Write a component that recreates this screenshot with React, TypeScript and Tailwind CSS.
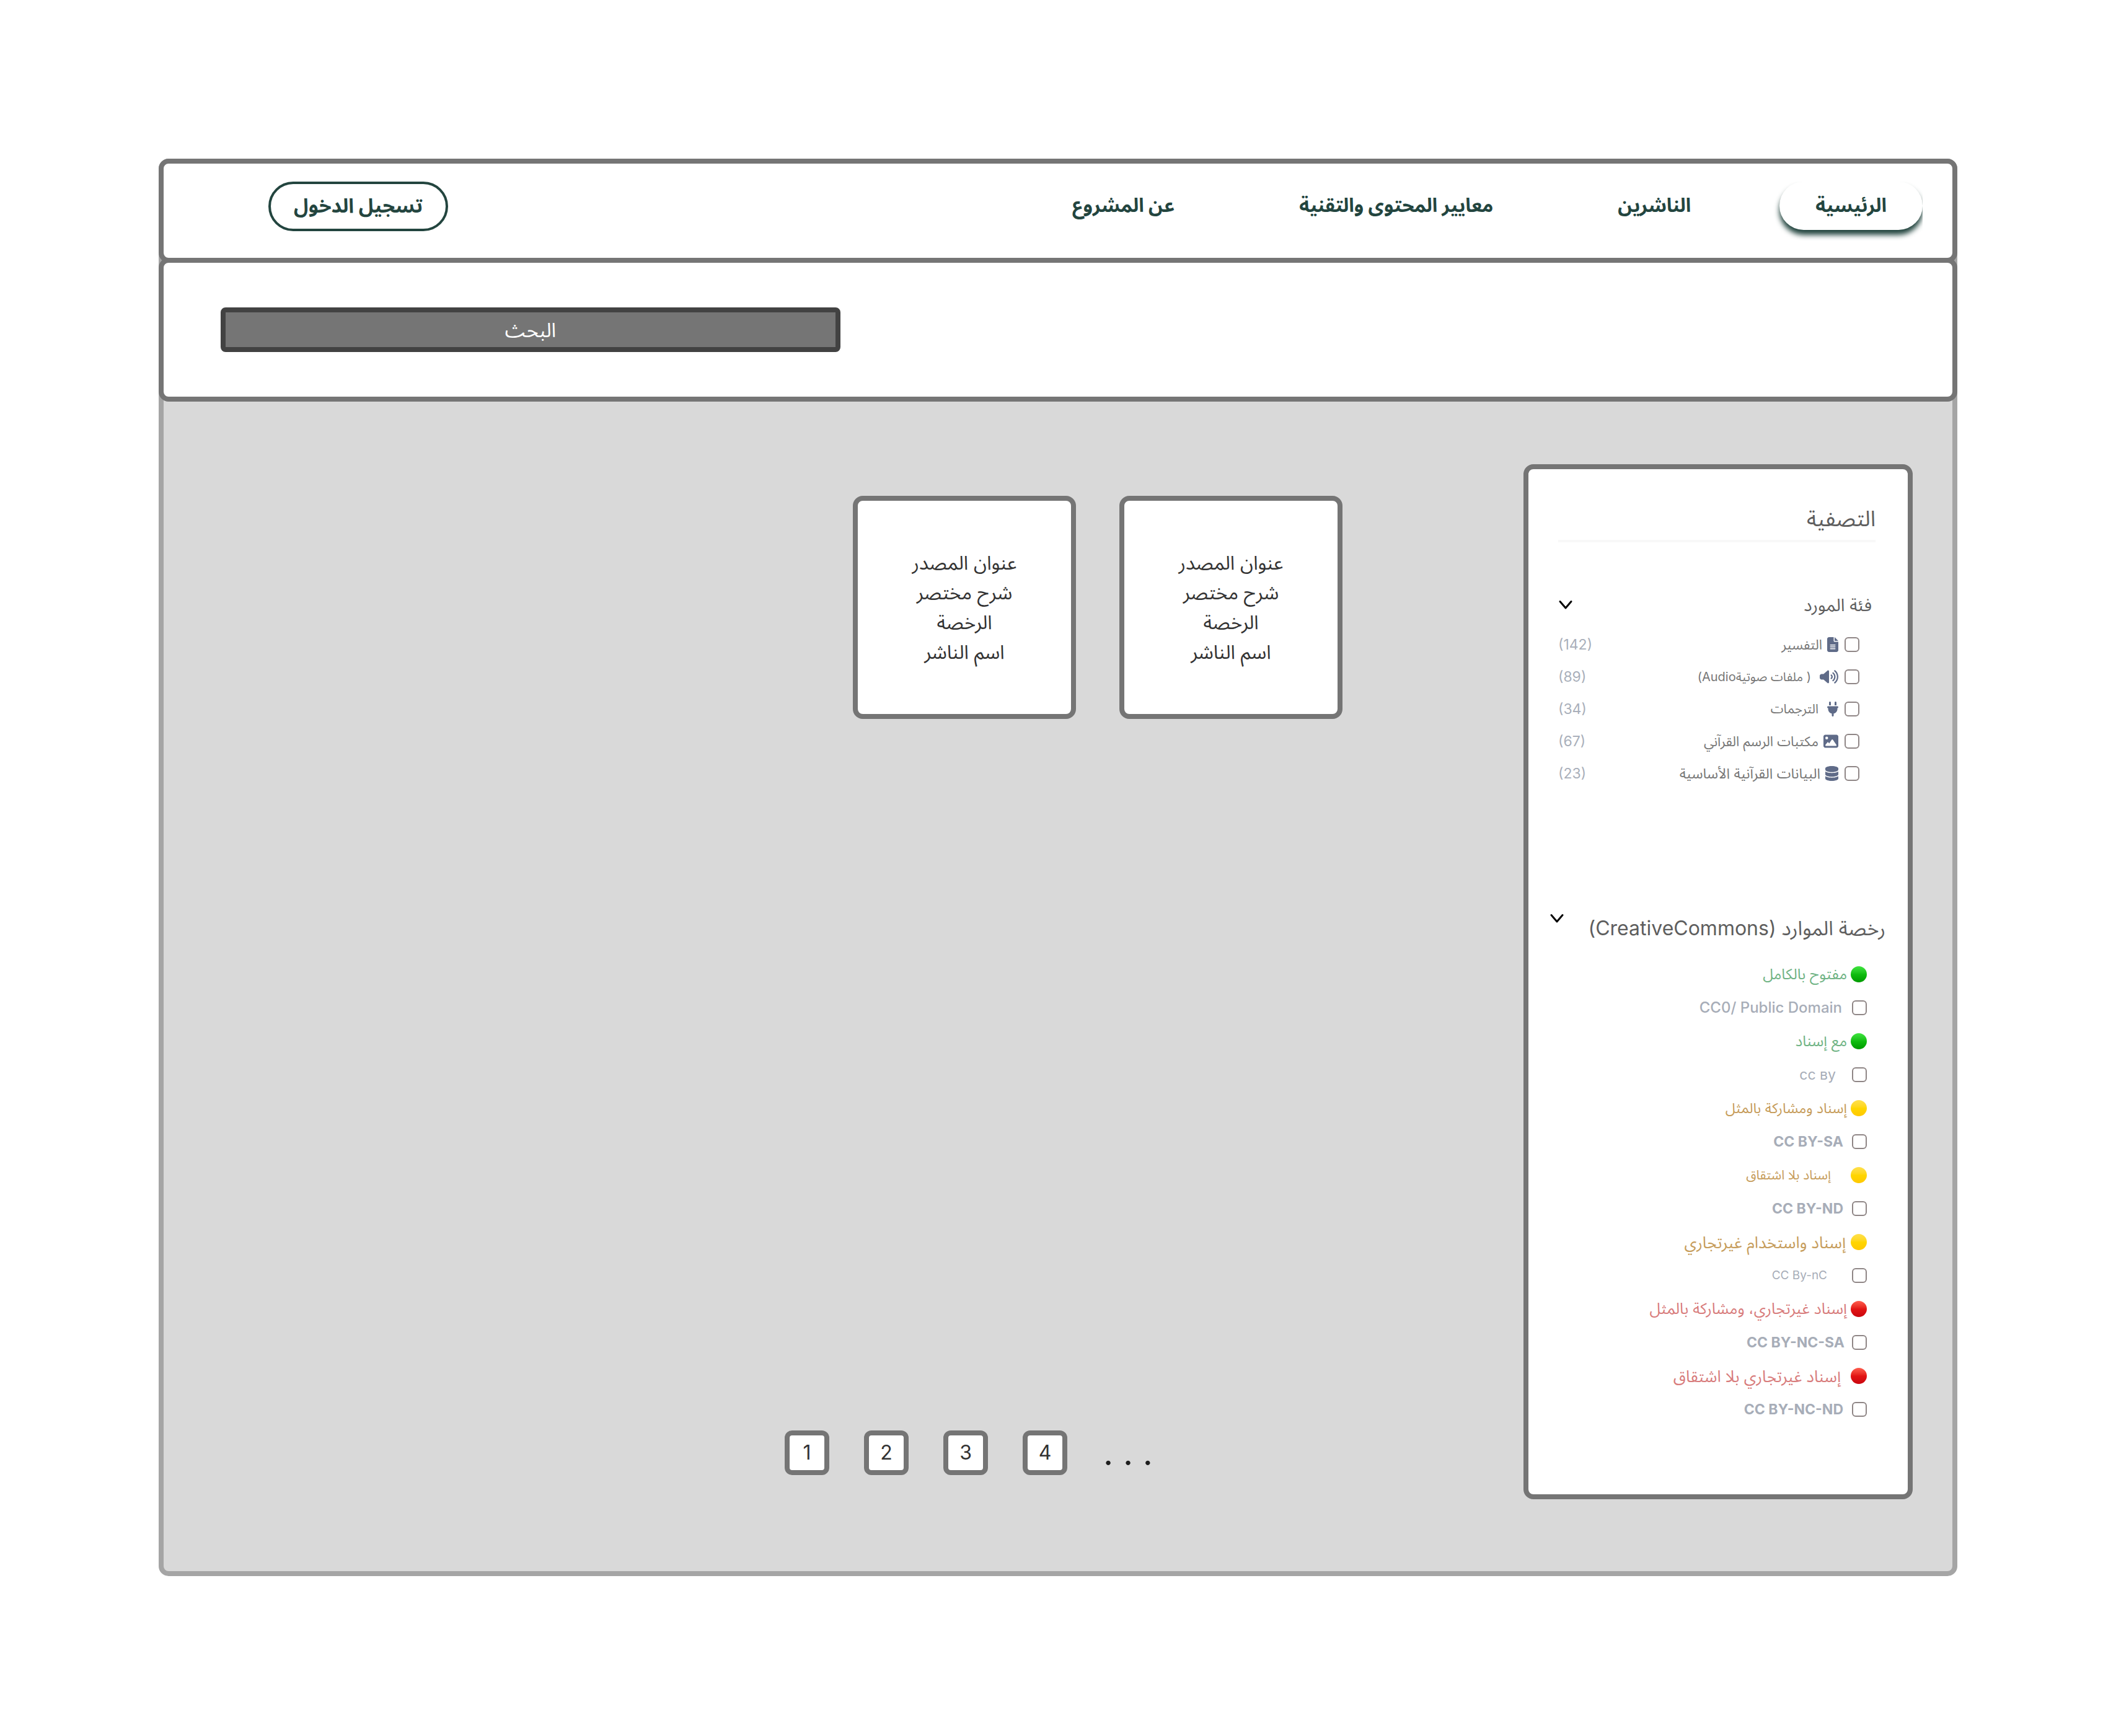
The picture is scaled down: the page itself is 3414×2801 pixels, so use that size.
import type { ComponentType } from 'react';
import { FaDatabase, FaFileLines, FaImage, FaPlug, FaVolumeHigh } from 'react-icons/fa6';

type Category = {
  label: string;
  count: number;
  icon: ComponentType<{ className?: string }>;
  iconSize: string;
  gap: string;
  text: string;
};

const categories: Category[] = [
  { label: 'التفسير', count: 142, icon: FaFileLines, iconSize: 'h-6 w-[18px]', gap: 'gap-2', text: 'text-[22px]' },
  { label: '( ملفات صوتيةAudio)', count: 89, icon: FaVolumeHigh, iconSize: 'h-6 w-[30px]', gap: 'gap-3.5', text: 'text-[20px]' },
  { label: 'الترجمات', count: 34, icon: FaPlug, iconSize: 'h-6 w-[18px]', gap: 'gap-3.5', text: 'text-[21px]' },
  { label: 'مكتبات الرسم القرآني', count: 67, icon: FaImage, iconSize: 'h-6 w-6', gap: 'gap-2', text: 'text-[22px]' },
  { label: 'البيانات القرآنية الأساسية', count: 23, icon: FaDatabase, iconSize: 'h-6 w-[21px]', gap: 'gap-2', text: 'text-[23px]' },
];

const dots = {
  green: 'bg-linear-to-b from-[#3fe53f] via-[#0fbd0f] to-[#009a00]',
  yellow: 'bg-linear-to-b from-[#ffe04a] via-[#ffd600] to-[#ffc800]',
  red: 'bg-linear-to-b from-[#ff5a4c] via-[#e31414] to-[#c9060f]',
};

const tones = {
  green: 'text-[#6fb384]',
  yellow: 'text-[#c69c5a]',
  red: 'text-[#d87c7c]',
};

type License = {
  tone: 'green' | 'yellow' | 'red';
  title: string;
  titleStyle: string;
  code: string;
  codeStyle: string;
};

const licenses: License[] = [
  { tone: 'green', title: 'مفتوح بالكامل', titleStyle: 'gap-1.5 text-[24px]', code: 'CC0/ Public Domain', codeStyle: 'gap-4 text-[24px] font-medium' },
  { tone: 'green', title: 'مع إسناد', titleStyle: 'gap-1.5 text-[24px]', code: 'cc вy', codeStyle: 'gap-[26px] text-[23px]' },
  { tone: 'yellow', title: 'إسناد ومشاركة بالمثل', titleStyle: 'gap-1.5 text-[23px]', code: 'CC BY-SA', codeStyle: 'gap-3.5 text-[23px] font-bold' },
  { tone: 'yellow', title: 'إسناد بلا اشتقاق', titleStyle: 'gap-8 text-[21px]', code: 'CC BY-ND', codeStyle: 'gap-3.5 text-[23px] font-bold' },
  { tone: 'yellow', title: 'إسناد واستخدام غيرتجاري', titleStyle: 'gap-2 text-[26px]', code: 'CC By-nC', codeStyle: 'gap-10 text-[19px]' },
  { tone: 'red', title: 'إسناد غيرتجاري، ومشاركة بالمثل', titleStyle: 'gap-1.5 text-[25px]', code: 'CC BY-NC-SA', codeStyle: 'gap-3 text-[23px] font-bold' },
  { tone: 'red', title: 'إسناد غيرتجاري بلا اشتقاق', titleStyle: 'gap-4 text-[26px]', code: 'CC BY-NC-ND', codeStyle: 'gap-3.5 text-[23px] font-bold' },
];

const cardLines = ['عنوان المصدر', 'شرح مختصر', 'الرخصة', 'اسم الناشر'];

function Checkbox() {
  return (
    <input
      type="checkbox"
      className="size-6 shrink-0 appearance-none rounded-[6px] border-2 border-[#8f8686] bg-white checked:bg-[#8f8686]"
    />
  );
}

function Chevron() {
  return (
    <svg viewBox="0 0 24 16" className="h-4 w-6" fill="none" stroke="#000" strokeWidth="3" strokeLinecap="round" strokeLinejoin="round">
      <path d="M3 2.5 12 13 21 2.5" />
    </svg>
  );
}

function SectionHeading({ title, className }: { title: string; className: string }) {
  return (
    <h3 className={className}>
      <span>{title}</span>
      <button type="button" aria-label={title} className="cursor-pointer">
        <Chevron />
      </button>
    </h3>
  );
}

function Header() {
  return (
    <header className="-mx-2 -mt-2 flex h-[168px] items-start justify-between rounded-2xl border-8 border-[#757575] bg-white ps-12 pe-[169px] pt-[29px] text-[31px] font-bold text-[#23453f]">
      <nav className="flex gap-[201px]">
        <div className="-me-[58px] [clip-path:inset(0_0_-24px_-24px)]">
          <a href="#home" className="flex h-[78px] items-center rounded-[40px] bg-white px-[58px] pb-0.5 shadow-[0_8px_8px_#23453f]">
            الرئيسية
          </a>
        </div>
        <a href="#publishers" className="flex h-[78px] items-center pb-0.5">
          الناشرين
        </a>
        <a href="#standards" className="flex h-[78px] items-center pb-0.5">
          معايير المحتوى والتقنية
        </a>
        <a href="#about" className="flex h-[78px] items-center pb-0.5">
          عن المشروع
        </a>
      </nav>
      <button type="button" className="flex h-20 w-[290px] cursor-pointer items-center justify-center rounded-[40px] border-4 border-[#23453f] pb-0.5 text-[32px]">
        تسجيل الدخول
      </button>
    </header>
  );
}

function SearchBar() {
  return (
    <section className="-mx-2 -mt-2 flex h-[232px] items-start justify-end rounded-2xl border-8 border-[#757575] bg-white pe-[92px] pt-[72px]">
      <input
        type="text"
        aria-label="البحث"
        placeholder="البحث"
        className="h-[72px] w-[1000px] rounded-lg border-8 border-[#424242] bg-[#757575] text-center text-[32px] text-white outline-none placeholder:text-white"
      />
    </section>
  );
}

function Filters() {
  return (
    <aside className="w-[628px] shrink-0 rounded-2xl border-8 border-[#757575] bg-white ps-[52px] pe-12 pt-11 pb-[110px] text-[#5e5e5e]">
      <h2 className="border-b-4 border-[#f8f8f8] text-[35px] leading-[70px]">التصفية</h2>

      <SectionHeading title="فئة المورد" className="mt-[77px] flex h-12 items-center justify-between ps-1.5 text-[28px]" />
      <ul className="mt-3.5">
        {categories.map(({ label, count, icon: Icon, iconSize, gap, text }) => (
          <li key={label} className="flex h-[52px] items-center justify-between ps-[26px]">
            <label className="flex items-center gap-2.5">
              <Checkbox />
              <span className={`flex items-center ${gap}`}>
                <Icon className={`${iconSize} text-[#5f6b88]`} />
                <span className={`${text} text-[#777777]`}>{label}</span>
              </span>
            </label>
            <span dir="ltr" className="text-[23px] text-[#a9afba]">
              ({count})
            </span>
          </li>
        ))}
      </ul>

      <SectionHeading
        title="رخصة الموارد (CreativeCommons)"
        className="-ms-4 -me-3.5 mt-[200px] flex h-12 items-start justify-between text-[32px] leading-[48px]"
      />
      <ul className="mt-[23px] ps-[14px]">
        {licenses.map(({ tone, title, titleStyle, code, codeStyle }) => (
          <li key={code}>
            <div className={`flex h-[54px] items-center ${tones[tone]} ${titleStyle}`}>
              <span className={`size-[26px] rounded-full ${dots[tone]}`} />
              {title}
            </div>
            <label className={`flex h-[54px] items-center text-[#a7adb8] ${codeStyle}`}>
              <Checkbox />
              <span dir="ltr">{code}</span>
            </label>
          </li>
        ))}
      </ul>
    </aside>
  );
}

function ResourceCard() {
  return (
    <article className="flex h-[360px] w-[360px] flex-col items-center justify-center rounded-2xl border-8 border-[#757575] bg-white text-[31px] leading-[48px] text-[#333333]">
      {cardLines.map((line) => (
        <p key={line}>{line}</p>
      ))}
    </article>
  );
}

function Pagination() {
  return (
    <nav dir="ltr" className="flex items-center justify-end gap-14 text-[32px] text-[#333333]">
      {[1, 2, 3, 4].map((page) => (
        <button key={page} type="button" className="size-[72px] cursor-pointer rounded-xl border-8 border-[#757575] bg-white">
          {page}
        </button>
      ))}
      <span className="ps-0.5 text-[56px] leading-[72px] text-[#1e1e1e]">. . .</span>
    </nav>
  );
}

export default function App() {
  return (
    <div dir="rtl" className="min-h-screen bg-white p-64 font-['Inter','Noto_Sans_Arabic',sans-serif]">
      <div className="rounded-2xl border-8 border-[#a5a5a5] bg-[#d9d9d9]">
        <Header />
        <SearchBar />
        <main className="flex items-stretch gap-[292px] ps-16 pt-[101px] pb-[116px]">
          <Filters />
          <div className="flex grow flex-col justify-between pt-[51px] pb-[39px]">
            <div className="flex flex-wrap gap-[70px]">
              <ResourceCard />
              <ResourceCard />
            </div>
            <div className="ps-[306px]">
              <Pagination />
            </div>
          </div>
        </main>
      </div>
    </div>
  );
}
